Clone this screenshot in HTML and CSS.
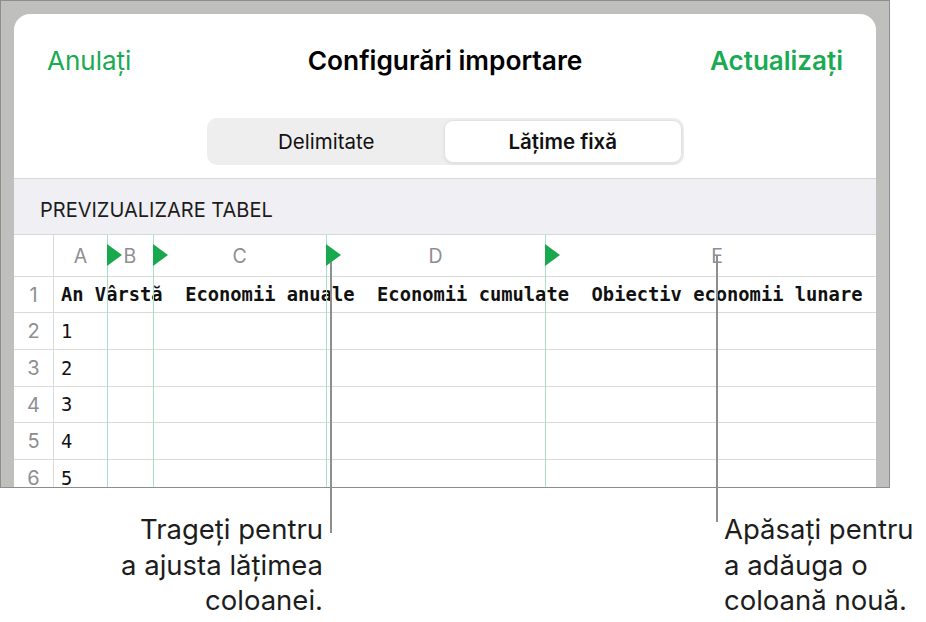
FILE: index.html
```
<!DOCTYPE html>
<html lang="ro">
<head>
    <meta charset="UTF-8">
    <meta name="viewport" content="width=device-width, initial-scale=1.0">
    <title>Configurări importare</title>
    <link rel="stylesheet" href="styles.css">
</head>
<body>

    <div class="shot">
        <div class="sheet">
            <div class="navbar">
                <span class="nav-btn">Anulați</span>
                <span class="nav-title">Configurări importare</span>
                <span class="nav-btn nav-done">Actualizați</span>
            </div>

            <div class="segmented">
                <div class="segment">Delimitate</div>
                <div class="segment active">Lățime fixă</div>
            </div>

            <div class="section-head">PREVIZUALIZARE TABEL</div>

            <div class="preview">
                <div class="col-heads">
                    <div class="corner"></div>
                    <div class="col-head">A</div>
                    <div class="col-head">B</div>
                    <div class="col-head">C</div>
                    <div class="col-head">D</div>
                    <div class="col-head">E</div>
                </div>
                <div class="row first">
                    <div class="row-num">1</div>
                    <div class="row-text bold">An Vârstă  Economii anuale  Economii cumulate  Obiectiv economii lunare</div>
                </div>
                <div class="row">
                    <div class="row-num">2</div>
                    <div class="row-text">1</div>
                </div>
                <div class="row">
                    <div class="row-num">3</div>
                    <div class="row-text">2</div>
                </div>
                <div class="row short">
                    <div class="row-num">4</div>
                    <div class="row-text">3</div>
                </div>
                <div class="row">
                    <div class="row-num">5</div>
                    <div class="row-text">4</div>
                </div>
                <div class="row">
                    <div class="row-num">6</div>
                    <div class="row-text">5</div>
                </div>

                <!-- markers for column breaks -->
                <div class="guides">
                    <div class="guide g-b"></div>
                    <div class="guide g-c"></div>
                    <div class="guide g-d"></div>
                    <div class="guide g-e"></div>
                </div>
            </div>
        </div>
    </div>

    <div class="callouts">
        <div class="callout callout-left">Trageți pentru<br>a ajusta lățimea<br>coloanei.</div>
        <div class="callout callout-right">Apăsați pentru<br>a adăuga o<br>coloană nouă.</div>
    </div>

</body>
</html>
```

FILE: styles.css
```
body {
    margin: 0;
    background: #fff;
    font-family: Inter, "Liberation Sans", sans-serif;
    color: #000;
}
.shot {
    width: 890px;
    height: 488px;
    box-sizing: border-box;
    border: 1px solid #8d8e8b;
    background: #bfc0bd;
    padding: 13px 13px 0;
}
.sheet {
    background: #fff;
    height: 100%;
    border-radius: 16px 16px 0 0;
    overflow: hidden;
    display: flex;
    flex-direction: column;
}
.navbar {
    height: 92px;
    flex-shrink: 0;
    display: grid;
    grid-template-columns: 1fr auto 1fr;
    align-items: center;
    padding: 0 33px;
}
.nav-btn {
    color: #1aab52;
    font-size: 26px;
}
.nav-done {
    justify-self: end;
    font-weight: 600;
}
.nav-title {
    font-size: 26.3px;
    font-weight: 600;
}
.segmented {
    align-self: center;
    flex-shrink: 0;
    margin-top: 12px;
    width: 477px;
    height: 47px;
    box-sizing: border-box;
    padding: 2px;
    background: #eeeeef;
    border-radius: 10px;
    display: flex;
}
.segment {
    flex: 1;
    display: flex;
    align-items: center;
    justify-content: center;
    font-size: 20.5px;
    color: #111;
    border-radius: 9px;
}
.segment.active {
    background: #fff;
    font-weight: 600;
    border: 1px solid #e2e2e4;
    box-shadow: 0 1px 3px rgba(0, 0, 0, 0.08);
}
.section-head {
    flex-shrink: 0;
    margin-top: 13px;
    height: 57px;
    box-sizing: border-box;
    border-top: 1px solid #d8d8da;
    border-bottom: 1px solid #d8d8da;
    background: #f0f0f4;
    padding: 7px 0 0 26px;
    display: flex;
    align-items: center;
    font-size: 20px;
    color: #1c1c1c;
}
.preview {
    position: relative;
    flex: 1;
}
.col-heads,
.guides {
    display: grid;
    grid-template-columns: 40px 53px 46px 173px 219px 344px;
}
.col-heads {
    height: 42px;
    box-sizing: border-box;
    border-bottom: 1px solid #dadada;
}
.corner {
    border-right: 1px solid #dadada;
}
.col-head {
    display: flex;
    align-items: center;
    justify-content: center;
    font-size: 19.5px;
    color: #8e8e92;
}
.row {
    display: flex;
    height: 37px;
    box-sizing: border-box;
    border-bottom: 1px solid #dadada;
}
.row.first,
.row.short {
    height: 36px;
}
.row-num {
    width: 40px;
    box-sizing: border-box;
    border-right: 1px solid #dadada;
    display: flex;
    align-items: center;
    justify-content: center;
    font-size: 20px;
    color: #8e8e92;
}
.row-text {
    padding-left: 7px;
    display: flex;
    align-items: center;
    font-family: "DejaVu Sans Mono", "Liberation Mono", monospace;
    font-size: 18.75px;
    white-space: pre;
    color: #111;
}
.row-text.bold {
    font-weight: bold;
}
.guides {
    position: absolute;
    top: 0;
    left: 0;
    bottom: 0;
}
.guide {
    position: relative;
    grid-row: 1;
    border-left: 1px solid #a9e0c4;
}
.guide::before {
    content: "";
    position: absolute;
    top: 9px;
    left: -1px;
    border-left: 15px solid #18a94f;
    border-top: 11.5px solid transparent;
    border-bottom: 11.5px solid transparent;
}
.g-b { grid-column: 3; }
.g-c { grid-column: 4; }
.g-d { grid-column: 5; }
.g-e { grid-column: 6; }

.callouts {
    display: flex;
    margin-top: 24px;
}
.callout {
    position: relative;
    font-size: 27.5px;
    line-height: 35.5px;
    color: #1d1d1d;
}
.callout::before {
    content: "";
    position: absolute;
    width: 2px;
    background: #8f8f8f;
}
.callout-left {
    width: 323px;
    text-align: right;
}
.callout-left::before {
    right: -9px;
    top: -250px;
    height: 271px;
}
.callout-right {
    margin-left: 401px;
}
.callout-right::before {
    left: -8px;
    top: -256px;
    height: 266px;
}
```
